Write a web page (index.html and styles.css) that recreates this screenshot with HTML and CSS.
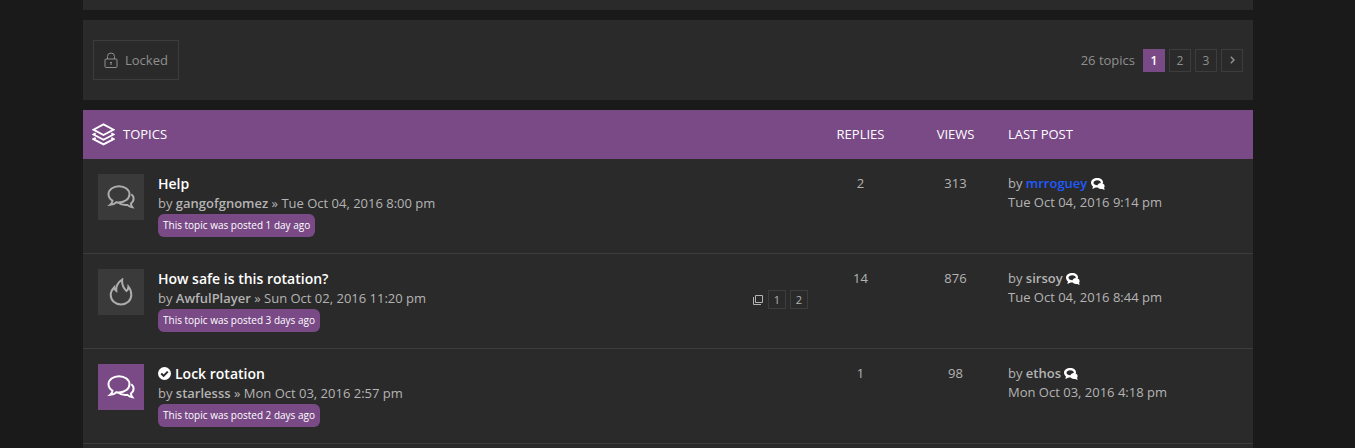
FILE: index.html
```html
<!DOCTYPE html>
<html lang="en">
<head>
    <meta charset="utf-8">
    <title>Topics</title>
    <meta name="viewport" content="width=device-width,initial-scale=1.0">
    <link rel="stylesheet" href="styles.css">
</head>
<body>
    <svg class="sprite" aria-hidden="true">
        <symbol id="icon-bubbles" viewBox="0 0 28 28">
            <path d="M12 3.2C6.2 3.2 1.500 6.700 1.500 11.300c0 2.700 1.500 4.900 4 6.400-.2 1.800-.9 3-2.300 4.100 2.700-.1 4.600-1 6.200-2.600.8.150 1.700.2 2.600.2 5.800 0 10.500-3.500 10.500-8.100S17.800 3.200 12 3.200z"/>
            <path d="M24.300 11.200c1.500 1.100 2.300 2.600 2.300 4.400 0 2-1 3.700-2.700 4.900.1 1.400.6 2.600 1.500 3.800-2-.2-3.700-1-5-2.400-3.500.4-6.900-.4-9-2.400"/>
        </symbol>
        <symbol id="icon-chat" viewBox="0 0 14 12">
            <path fill-rule="evenodd" d="M6.300 0C2.800 0 0 2 0 4.800c0 1.500.8 2.800 2 3.700L1.300 11l3.300-1.500 2.200.1 1.500-1.400 3.800-3.400C12.100 1.900 9.700 0 6.300 0zM6.300 2.300c2 0 3.500 1 3.500 2.500S8.300 7.200 6.300 7.200 2.500 6.300 2.500 4.800s1.800-2.500 3.800-2.500z"/>
            <path d="M10 4.900c-2 0-3.500 1.300-3.500 3s1.500 3.100 3.500 3.100c.4 0 .8 0 1.200-.1L13.600 12l-.5-2.300c.3-.5.500-1 .5-1.700 0-1.800-1.600-3.100-3.600-3.100z"/>
        </symbol>
    </svg>

    <div class="page">
        <div class="panel strip"></div>

        <div class="panel action-bar">
            <button type="button" class="btn">
                <svg class="icon-lock" width="14" height="17" viewBox="0 0 14 17" aria-hidden="true">
                    <rect x="1" y="7" width="12" height="8.500" rx="1"/>
                    <path d="M3.500 7V4.500a3.500 3.500 0 0 1 7 0V7M7 10.500v2.500M6 10.500h2"/>
                </svg>
                Locked
            </button>
            <nav class="pagination" aria-label="Pages">
                <span class="total">26 topics</span>
                <a class="page-link active" href="#">1</a>
                <a class="page-link" href="#">2</a>
                <a class="page-link" href="#">3</a>
                <a class="page-link" href="#" aria-label="Next">
                    <svg class="arrow" width="5" height="8" viewBox="0 0 5 8" aria-hidden="true"><path d="M.8.800L4 4 .8 7.200"/></svg>
                </a>
            </nav>
        </div>

        <div class="panel forum">
            <table class="topics">
                <thead>
                    <tr>
                        <th class="col-topic" scope="col">
                            <div class="heading">
                                <svg width="23" height="23" viewBox="0 0 24 24" aria-hidden="true">
                                    <path d="M12 1.500L22.500 7 12 12.500 1.500 7zM3.800 10.700L1.500 12 12 17.500 22.500 12l-2.300-1.300M3.800 15.500L1.500 16.800 12 22.300l10.500-5.500-2.300-1.300"/>
                                </svg>
                                Topics
                            </div>
                        </th>
                        <th class="col-count" scope="col">Replies</th>
                        <th class="col-count" scope="col">Views</th>
                        <th class="col-last" scope="col">Last post</th>
                    </tr>
                </thead>
                <tbody>
                    <tr>
                        <td>
                            <div class="topic">
                                <span class="topic-icon"><svg width="28" height="28" aria-hidden="true"><use href="#icon-bubbles"/></svg></span>
                                <div class="topic-text">
                                    <a class="topic-title" href="#">Help</a>
                                    <div class="byline">by <a class="user" href="#">gangofgnomez</a> » Tue Oct 04, 2016 8:00 pm</div>
                                    <span class="age">This topic was posted 1 day ago</span>
                                </div>
                            </div>
                        </td>
                        <td class="col-count">2</td>
                        <td class="col-count">313</td>
                        <td class="col-last">by <a class="user admin" href="#">mrroguey</a> <a class="view-last" href="#" aria-label="View last post"><svg width="14" height="12" aria-hidden="true"><use href="#icon-chat"/></svg></a><br>Tue Oct 04, 2016 9:14 pm</td>
                    </tr>
                    <tr>
                        <td>
                            <div class="topic">
                                <span class="topic-icon">
                                    <svg width="28" height="28" viewBox="0 0 28 28" aria-hidden="true">
                                        <path d="M15.200 1.500C11 4.200 8.900 8 9.300 12.800 8.100 12 7.400 10.800 7.300 9.200 5 11.600 3.700 14.200 3.700 17c0 5.400 4.500 9.400 10.300 9.400S24.300 22.400 24.300 17c0-3-.8-5.800-2.900-8.300-.1 2-.7 3.300-1.900 4.300C16.200 9.800 14.700 6 15.200 1.500z"/>
                                    </svg>
                                </span>
                                <div class="topic-text">
                                    <a class="topic-title" href="#">How safe is this rotation?</a>
                                    <div class="byline">by <a class="user" href="#">AwfulPlayer</a> » Sun Oct 02, 2016 11:20 pm</div>
                                    <span class="age">This topic was posted 3 days ago</span>
                                </div>
                                <div class="topic-pages">
                                    <svg width="12" height="12" viewBox="0 0 12 12" aria-hidden="true"><path d="M3.500 1.500h7v7h-7zM1.500 3v7.500H9"/></svg>
                                    <a class="topic-page" href="#">1</a>
                                    <a class="topic-page" href="#">2</a>
                                </div>
                            </div>
                        </td>
                        <td class="col-count">14</td>
                        <td class="col-count">876</td>
                        <td class="col-last">by <a class="user" href="#">sirsoy</a> <a class="view-last" href="#" aria-label="View last post"><svg width="14" height="12" aria-hidden="true"><use href="#icon-chat"/></svg></a><br>Tue Oct 04, 2016 8:44 pm</td>
                    </tr>
                    <tr>
                        <td>
                            <div class="topic">
                                <span class="topic-icon unread"><svg width="28" height="28" aria-hidden="true"><use href="#icon-bubbles"/></svg></span>
                                <div class="topic-text">
                                    <a class="topic-title" href="#"><svg class="solved" width="13" height="13" viewBox="0 0 13 13" aria-hidden="true"><circle cx="6.500" cy="6.500" r="6.500"/><path d="M3.200 6.500l2.400 2.400 4.200-4.300"/></svg>Lock rotation</a>
                                    <div class="byline">by <a class="user" href="#">starlesss</a> » Mon Oct 03, 2016 2:57 pm</div>
                                    <span class="age">This topic was posted 2 days ago</span>
                                </div>
                            </div>
                        </td>
                        <td class="col-count">1</td>
                        <td class="col-count">98</td>
                        <td class="col-last">by <a class="user" href="#">ethos</a> <a class="view-last" href="#" aria-label="View last post"><svg width="14" height="12" aria-hidden="true"><use href="#icon-chat"/></svg></a><br>Mon Oct 03, 2016 4:18 pm</td>
                    </tr>
                </tbody>
            </table>
        </div>
    </div>
</body>
</html>
```
FILE: styles.css
```css
*{
    box-sizing: border-box;
}

body{
    margin: 0;
    padding-right: 19px;
    background: #1a1a1a;
    color: #b4b4b4;
    font: 13px/19px "Open Sans", sans-serif;
}

a{
    color: inherit;
    text-decoration: none;
}

svg{
    flex: none;
    fill: none;
    stroke: currentColor;
}

.sprite{
    display: none;
}

.page{
    display: flex;
    flex-direction: column;
    gap: 10px;
    max-width: 1170px;
    min-height: 100vh;
    margin: 0 auto;
}

.panel{
    background: #2a2a2a;
}

.strip{
    height: 10px;
}

/* action bar */
.action-bar{
    display: flex;
    justify-content: space-between;
    align-items: center;
    padding: 20px 10px;
    color: #8f8f8f;
}

.btn{
    display: flex;
    align-items: center;
    gap: 7px;
    height: 40px;
    padding: 0 10px;
    border: 1px solid #3d3d3d;
    background: none;
    color: inherit;
    font: inherit;
}

.pagination{
    display: flex;
    align-items: center;
    gap: 4px;
}

.total{
    margin-right: 4px;
}

.page-link{
    display: flex;
    justify-content: center;
    align-items: center;
    width: 22px;
    height: 23px;
    border: 1px solid #3d3d3d;
    font-size: 12px;
}

.page-link.active{
    border-color: #7a4a87;
    background: #7a4a87;
    color: #fff;
    font-weight: 600;
}

.arrow{
    stroke-width: 1.5;
}

/* topic list */
.forum{
    flex: 1;
}

.topics{
    width: 100%;
    border-collapse: collapse;
    table-layout: fixed;
}

th{
    height: 49px;
    padding: 0;
    background: #7a4a87;
    color: #fff;
    font-weight: 500;
    text-align: left;
    text-transform: uppercase;
}

td{
    padding: 15px 0 16px;
    border-bottom: 1px solid #3d3d3d;
    vertical-align: top;
}

.col-count{
    width: 95px;
    text-align: center;
}

.col-last{
    width: 250px;
    padding-left: 5px;
}

.heading{
    display: flex;
    align-items: center;
    gap: 8px;
    padding-left: 9px;
}

.heading svg{
    stroke-width: 2;
}

.topic{
    display: flex;
    gap: 14px;
    padding: 0 5px 0 15px;
}

.topic-icon{
    display: flex;
    flex: none;
    justify-content: center;
    align-items: center;
    width: 46px;
    height: 46px;
    background: #3a3a3a;
    color: #adadad;
    stroke-width: 2;
}

.topic-icon.unread{
    background: #7a4a87;
    color: #fff;
}

.topic-title{
    display: block;
    color: #fff;
    font-size: 14px;
    font-weight: 600;
    line-height: 20px;
}

.solved{
    margin-right: 4px;
    vertical-align: -1px;
}

.solved circle{
    fill: #fff;
    stroke: none;
}

.solved path{
    stroke: #2a2a2a;
    stroke-width: 2;
}

.user{
    font-weight: 600;
}

.user.admin{
    color: #1e5bff;
}

.age{
    display: block;
    width: fit-content;
    margin-top: 1px;
    padding: 0 5px;
    border-radius: 6px;
    background: #7a4a87;
    color: #fff;
    font-size: 10px;
    font-weight: 500;
    line-height: 23px;
}

.topic-pages{
    display: flex;
    align-self: flex-start;
    align-items: center;
    gap: 4px;
    margin: 21px 0 0 auto;
}

.topic-page{
    width: 18px;
    border: 1px solid #3d3d3d;
    font-size: 11px;
    line-height: 17px;
    text-align: center;
}

.view-last svg{
    color: #fff;
    fill: currentColor;
    stroke: none;
    vertical-align: -2px;
}
```
